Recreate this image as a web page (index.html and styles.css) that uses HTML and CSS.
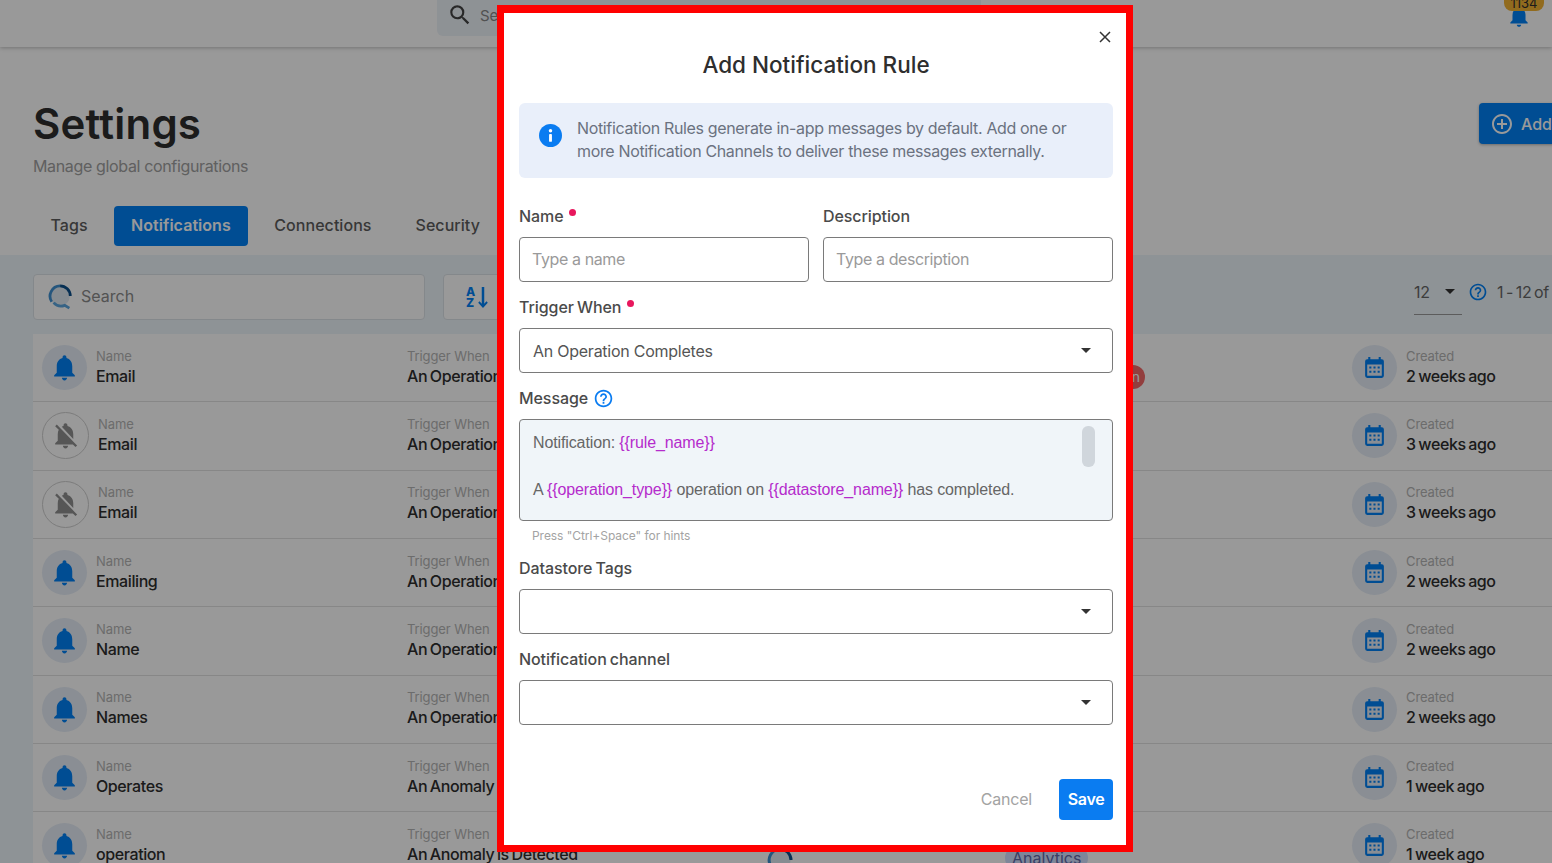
FILE: index.html
```html
<!DOCTYPE html>
<html lang="en">
<head>
    <meta charset="UTF-8">
    <title>Settings - Notifications</title>
    <link rel="stylesheet" href="styles.css">
</head>
<body>
    <svg class="sprites" width="0" height="0">
        <symbol id="bell" viewBox="0 0 24 24"><path d="M12 22c1.1 0 2-.9 2-2h-4c0 1.1.89 2 2 2zm6-6v-5c0-3.07-1.64-5.64-4.5-6.32V4c0-.83-.67-1.5-1.5-1.5s-1.5.67-1.5 1.5v.68C7.63 5.36 6 7.92 6 11v5l-2 2v1h16v-1l-2-2z"/></symbol>
        <symbol id="bell-off" viewBox="0 0 24 24"><path d="M20 18.69 7.84 6.14 5.27 3.49 4 4.76l2.8 2.8v.01c-.52.99-.8 2.16-.8 3.42v5l-2 2v1h13.73l2 2L21 19.72l-1-1.03zM12 22c1.11 0 2-.89 2-2h-4c0 1.11.89 2 2 2zm6-7.32V11c0-3.08-1.64-5.64-4.5-6.32V4c0-.83-.67-1.5-1.5-1.5s-1.5.67-1.5 1.5v.68c-.15.03-.29.08-.42.12-.1.03-.2.07-.3.11h-.01c-.2.08-.4.17-.59.27-.01 0-.01 0-.02.01L18 14.68z"/></symbol>
        <symbol id="calendar" viewBox="0 0 24 24"><path d="M19 4h-1V2h-2v2H8V2H6v2H5a2 2 0 0 0-2 2v14a2 2 0 0 0 2 2h14a2 2 0 0 0 2-2V6a2 2 0 0 0-2-2zm0 16H5V9h14v11z"/><path d="M7 11h2v2H7zM11 11h2v2h-2zM15 11h2v2h-2zM7 15h2v2H7zM11 15h2v2h-2zM15 15h2v2h-2z"/></symbol>
        <symbol id="help" viewBox="0 0 24 24"><path d="M11 18h2v-2h-2v2zm1-16C6.48 2 2 6.48 2 12s4.48 10 10 10 10-4.48 10-10S17.52 2 12 2zm0 18c-4.41 0-8-3.59-8-8s3.59-8 8-8 8 3.59 8 8-3.59 8-8 8zm0-14c-2.21 0-4 1.79-4 4h2c0-1.1.9-2 2-2s2 .9 2 2c0 2-3 1.75-3 5h2c0-2.25 3-2.5 3-5 0-2.21-1.79-4-4-4z"/></symbol>
        <symbol id="logo" viewBox="0 0 28 28">
            <circle cx="13" cy="13" r="10.5" fill="#dfe9f2"/>
            <path d="M4 19A11 11 0 0 1 13 2" fill="none" stroke="#3f8fd0" stroke-width="3"/>
            <path d="M13 2a11 11 0 0 1 11 11" fill="none" stroke="#0b4f8a" stroke-width="3"/>
            <path d="M6 20a11 11 0 0 0 12 3l5 3" fill="none" stroke="#5aa5de" stroke-width="3"/>
        </symbol>
    </svg>

    <div class="page">
        <header class="topbar">
            <div class="global-search">
                <svg class="global-search-icon" viewBox="0 0 24 24"><path d="M15.5 14h-.79l-.28-.27A6.47 6.47 0 0 0 16 9.5 6.5 6.5 0 1 0 9.5 16c1.61 0 3.09-.59 4.23-1.57l.27.28v.79l5 4.99L20.49 19l-4.99-5zm-6 0C7.01 14 5 11.99 5 9.5S7.01 5 9.5 5 14 7.01 14 9.5 11.99 14 9.5 14z"/></svg>
                <span>Search</span>
            </div>
            <div class="topbar-bell">
                <svg class="topbar-bell-icon"><use href="#bell"/></svg>
                <span class="bell-badge">1134</span>
            </div>
        </header>

        <section class="page-head">
            <div class="head-top">
                <div>
                    <h1 class="page-title">Settings</h1>
                    <p class="page-sub">Manage global configurations</p>
                </div>
                <button class="add-btn">
                    <svg class="add-icon" viewBox="0 0 24 24"><path d="M13 7h-2v4H7v2h4v4h2v-4h4v-2h-4V7zm-1-5C6.48 2 2 6.48 2 12s4.48 10 10 10 10-4.48 10-10S17.52 2 12 2zm0 18c-4.41 0-8-3.59-8-8s3.59-8 8-8 8 3.59 8 8-3.59 8-8 8z"/></svg>
                    Add
                </button>
            </div>
            <nav class="tabs">
                <a class="tab">Tags</a>
                <a class="tab tab-active">Notifications</a>
                <a class="tab">Connections</a>
                <a class="tab">Security</a>
            </nav>
        </section>

        <section class="list-area">
            <div class="toolbar">
                <div class="list-search">
                    <svg class="list-search-icon"><use href="#logo"/></svg>
                    <span>Search</span>
                </div>
                <div class="sort-btn">
                    <span class="sort-letters"><span>A</span><span>Z</span></span>
                    <svg class="sort-arrow" viewBox="0 0 10 24"><path d="M3.7 1h2.6v17.5L8.6 16 10 17.4 5 23 0 17.4 1.4 16l2.3 2.5z"/></svg>
                </div>
                <div class="pager">
                    <div class="page-size"><span>12</span><i class="caret"></i></div>
                    <svg class="pager-help"><use href="#help"/></svg>
                    <span class="page-range">1 - 12 of</span>
                </div>
            </div>

            <div class="rule-row">
                <div class="cell"><span class="circle"><svg class="bell"><use href="#bell"/></svg></span><div class="cell-text"><div class="cell-label">Name</div><div class="cell-value">Email</div></div></div>
                <div class="cell-text"><div class="cell-label">Trigger When</div><div class="cell-value">An Operation Completes</div></div>
                <div></div>
                <div class="cell-tag"><span class="red-pill">n</span></div>
                <div class="cell"><span class="circle"><svg class="cal"><use href="#calendar"/></svg></span><div class="cell-text"><div class="cell-label">Created</div><div class="cell-value">2 weeks ago</div></div></div>
            </div>
            <div class="rule-row">
                <div class="cell"><span class="circle circle-off"><svg class="bell"><use href="#bell-off"/></svg></span><div class="cell-text"><div class="cell-label">Name</div><div class="cell-value">Email</div></div></div>
                <div class="cell-text"><div class="cell-label">Trigger When</div><div class="cell-value">An Operation Completes</div></div>
                <div></div>
                <div></div>
                <div class="cell"><span class="circle"><svg class="cal"><use href="#calendar"/></svg></span><div class="cell-text"><div class="cell-label">Created</div><div class="cell-value">3 weeks ago</div></div></div>
            </div>
            <div class="rule-row">
                <div class="cell"><span class="circle circle-off"><svg class="bell"><use href="#bell-off"/></svg></span><div class="cell-text"><div class="cell-label">Name</div><div class="cell-value">Email</div></div></div>
                <div class="cell-text"><div class="cell-label">Trigger When</div><div class="cell-value">An Operation Completes</div></div>
                <div></div>
                <div></div>
                <div class="cell"><span class="circle"><svg class="cal"><use href="#calendar"/></svg></span><div class="cell-text"><div class="cell-label">Created</div><div class="cell-value">3 weeks ago</div></div></div>
            </div>
            <div class="rule-row">
                <div class="cell"><span class="circle"><svg class="bell"><use href="#bell"/></svg></span><div class="cell-text"><div class="cell-label">Name</div><div class="cell-value">Emailing</div></div></div>
                <div class="cell-text"><div class="cell-label">Trigger When</div><div class="cell-value">An Operation Completes</div></div>
                <div></div>
                <div></div>
                <div class="cell"><span class="circle"><svg class="cal"><use href="#calendar"/></svg></span><div class="cell-text"><div class="cell-label">Created</div><div class="cell-value">2 weeks ago</div></div></div>
            </div>
            <div class="rule-row">
                <div class="cell"><span class="circle"><svg class="bell"><use href="#bell"/></svg></span><div class="cell-text"><div class="cell-label">Name</div><div class="cell-value">Name</div></div></div>
                <div class="cell-text"><div class="cell-label">Trigger When</div><div class="cell-value">An Operation Completes</div></div>
                <div></div>
                <div></div>
                <div class="cell"><span class="circle"><svg class="cal"><use href="#calendar"/></svg></span><div class="cell-text"><div class="cell-label">Created</div><div class="cell-value">2 weeks ago</div></div></div>
            </div>
            <div class="rule-row">
                <div class="cell"><span class="circle"><svg class="bell"><use href="#bell"/></svg></span><div class="cell-text"><div class="cell-label">Name</div><div class="cell-value">Names</div></div></div>
                <div class="cell-text"><div class="cell-label">Trigger When</div><div class="cell-value">An Operation Completes</div></div>
                <div></div>
                <div></div>
                <div class="cell"><span class="circle"><svg class="cal"><use href="#calendar"/></svg></span><div class="cell-text"><div class="cell-label">Created</div><div class="cell-value">2 weeks ago</div></div></div>
            </div>
            <div class="rule-row">
                <div class="cell"><span class="circle"><svg class="bell"><use href="#bell"/></svg></span><div class="cell-text"><div class="cell-label">Name</div><div class="cell-value">Operates</div></div></div>
                <div class="cell-text"><div class="cell-label">Trigger When</div><div class="cell-value">An Anomaly is Detected</div></div>
                <div></div>
                <div></div>
                <div class="cell"><span class="circle"><svg class="cal"><use href="#calendar"/></svg></span><div class="cell-text"><div class="cell-label">Created</div><div class="cell-value">1 week ago</div></div></div>
            </div>
            <div class="rule-row">
                <div class="cell"><span class="circle"><svg class="bell"><use href="#bell"/></svg></span><div class="cell-text"><div class="cell-label">Name</div><div class="cell-value">operation</div></div></div>
                <div class="cell-text"><div class="cell-label">Trigger When</div><div class="cell-value">An Anomaly is Detected</div></div>
                <div class="cell-source"><svg class="source-icon"><use href="#logo"/></svg></div>
                <div class="cell-tag"><span class="tag-pill">Analytics</span></div>
                <div class="cell"><span class="circle"><svg class="cal"><use href="#calendar"/></svg></span><div class="cell-text"><div class="cell-label">Created</div><div class="cell-value">1 week ago</div></div></div>
            </div>
        </section>
    </div>

    <div class="backdrop">
        <div class="modal">
            <button class="modal-close">
                <svg viewBox="0 0 12 12"><path d="M1 1l10 10M11 1 1 11" stroke="#333" stroke-width="1.5" fill="none"/></svg>
            </button>
            <h2 class="modal-title">Add Notification Rule</h2>

            <div class="info-box">
                <svg class="info-icon" viewBox="0 0 24 24"><circle cx="12" cy="12" r="12" fill="#0a7cf1"/><rect x="10.5" y="10.5" width="3" height="8" rx=".5" fill="#fff"/><circle cx="12" cy="7" r="1.8" fill="#fff"/></svg>
                <p>Notification Rules generate in-app messages by default. Add one or more Notification Channels to deliver these messages externally.</p>
            </div>

            <div class="field-pair">
                <div>
                    <label class="field-label">Name <i class="req"></i></label>
                    <div class="input placeholder">Type a name</div>
                </div>
                <div>
                    <label class="field-label">Description</label>
                    <div class="input placeholder">Type a description</div>
                </div>
            </div>

            <div class="field">
                <label class="field-label">Trigger When <i class="req"></i></label>
                <div class="input select">An Operation Completes<i class="caret"></i></div>
            </div>

            <div class="field">
                <label class="field-label">Message <svg class="label-help"><use href="#help"/></svg></label>
                <div class="editor">
                    <div class="editor-line">Notification: <span class="token">{{rule_name}}</span></div>
                    <div class="editor-line">&nbsp;</div>
                    <div class="editor-line">A <span class="token">{{operation_type}}</span> operation on <span class="token">{{datastore_name}}</span> has completed.</div>
                    <span class="editor-thumb"></span>
                </div>
                <div class="hint">Press "Ctrl+Space" for hints</div>
            </div>

            <div class="field">
                <label class="field-label">Datastore Tags</label>
                <div class="input select select-empty"><i class="caret"></i></div>
            </div>

            <div class="field">
                <label class="field-label">Notification channel</label>
                <div class="input select select-empty"><i class="caret"></i></div>
            </div>

            <div class="modal-actions">
                <button class="btn-cancel">Cancel</button>
                <button class="btn-save">Save</button>
            </div>
        </div>
    </div>
</body>
</html>
```

FILE: styles.css
```css
* {
    box-sizing: border-box;
}
html, body {
    margin: 0;
    height: 100%;
    overflow: hidden;
}
body {
    font-family: Inter, "Noto Sans", sans-serif;
    color: #2e2e2e;
    background-color: #fff;
}
h1, h2, p {
    margin: 0;
}
button {
    font-family: inherit;
    border: none;
    background: none;
    padding: 0;
}
.sprites {
    position: absolute;
}
.page {
    height: 100%;
    overflow: hidden;
}

/* top bar */
.topbar {
    position: relative;
    display: flex;
    height: 47px;
    padding-left: 437px;
    background-color: #fff;
    box-shadow: 0 1px 4px rgba(0,0,0,0.25);
}
.global-search {
    display: flex;
    align-items: center;
    width: 544px;
    height: 36px;
    padding: 0 0 6px 10px;
    gap: 7px;
    background-color: #edf3f9;
    border-radius: 0 0 6px 6px;
    font-size: 15px;
    color: #888;
}
.global-search-icon {
    width: 26px;
    height: 26px;
    fill: #444;
}
.topbar-bell {
    position: absolute;
    left: 1504px;
    top: 0;
}
.topbar-bell-icon {
    position: absolute;
    left: 0;
    top: 3px;
    width: 30px;
    height: 26px;
    fill: #0080f6;
}
.bell-badge {
    position: absolute;
    left: 0;
    top: -10px;
    width: 40px;
    height: 21px;
    padding-top: 6px;
    border-radius: 0 0 8px 8px;
    background-color: #f2b233;
    font-size: 13px;
    line-height: 14px;
    text-align: center;
}

/* page heading */
.page-head {
    height: 208px;
    padding: 52px 0 0 33px;
}
.head-top {
    display: flex;
    justify-content: space-between;
    align-items: flex-start;
}
.page-title {
    font-size: 42px;
    line-height: 50px;
    font-weight: 600;
    letter-spacing: 0.2px;
}
.page-sub {
    margin-top: 6px;
    font-size: 16px;
    line-height: 22px;
    letter-spacing: -0.35px;
    color: #a0a0a0;
}
.add-btn {
    display: flex;
    align-items: center;
    gap: 7px;
    flex-shrink: 0;
    width: 100px;
    height: 41px;
    margin: 4px -27px 0 0;
    padding-left: 11px;
    border-radius: 4px 0 0 4px;
    background-color: #0080f6;
    box-shadow: 0 1px 3px rgba(0,0,0,0.3);
    color: #fff;
    font-size: 16px;
    font-weight: 500;
}
.add-icon {
    width: 24px;
    height: 24px;
    fill: #fff;
}
.tabs {
    display: flex;
    gap: 9px;
    margin-top: 29px;
}
.tab {
    height: 40px;
    padding: 0 17.5px;
    border-radius: 4px;
    font-size: 16px;
    line-height: 38px;
    font-weight: 500;
    letter-spacing: 0.05px;
    color: #5c5c5c;
}
.tab-active {
    padding: 0 17px;
    background-color: #0080f6;
    color: #fff;
    font-weight: 600;
}

/* list */
.list-area {
    height: 608px;
    background-color: #edf5fb;
    padding-top: 19px;
}
.toolbar {
    display: flex;
    height: 46px;
    margin: 0 0 14px 33px;
}
.list-search {
    display: flex;
    align-items: center;
    gap: 7px;
    width: 392px;
    padding-left: 14px;
    background-color: #fff;
    border: 1px solid #dde3e8;
    border-radius: 4px;
    font-size: 16px;
    line-height: 20px;
    color: #8a8a8a;
}
.list-search span {
    margin-bottom: 2px;
}
.list-search-icon {
    width: 26px;
    height: 28px;
}
.sort-btn {
    display: flex;
    align-items: center;
    gap: 3px;
    width: 64px;
    margin-left: 18px;
    padding-left: 22px;
    background-color: #fff;
    border: 1px solid #dde3e8;
    border-radius: 4px;
}
.sort-letters {
    display: flex;
    flex-direction: column;
    font-size: 12px;
    line-height: 11px;
    font-weight: 800;
    color: #0080f6;
}
.sort-arrow {
    width: 10px;
    height: 23px;
    fill: #0080f6;
}
.pager {
    display: flex;
    align-items: flex-start;
    margin-left: auto;
    margin-right: 3px;
    height: 41px;
    font-size: 16px;
    line-height: 36px;
    letter-spacing: -0.3px;
    color: #666;
}
.page-size {
    display: flex;
    align-items: flex-start;
    justify-content: space-between;
    width: 48px;
    height: 41px;
    padding-right: 7px;
    border-bottom: 1px solid #999;
}
.page-size .caret {
    margin-top: 15px;
}
.pager-help {
    width: 20px;
    height: 20px;
    margin: 8px 9px 0 6px;
    fill: #0080f6;
}
.page-range {
    word-spacing: -1.5px;
}
.caret {
    width: 0;
    height: 0;
    border-left: 5.5px solid transparent;
    border-right: 5.5px solid transparent;
    border-top: 5.5px solid #333;
}
.rule-row {
    display: grid;
    grid-template-columns: 365px 350px 248px 347px 1fr;
    height: 68.33px;
    margin-left: 33px;
    padding-left: 9px;
    background-color: #fff;
    border-bottom: 1px solid #e2e2e2;
}
.cell {
    display: flex;
    align-items: center;
    gap: 9px;
}
.cell-text {
    align-self: center;
    margin-top: -2px;
}
.cell-label {
    font-size: 13px;
    line-height: 18px;
    letter-spacing: -0.1px;
    color: #b4b4b4;
}
.cell-value {
    font-size: 16px;
    line-height: 22px;
    font-weight: 500;
    letter-spacing: -0.4px;
    word-spacing: -1.2px;
    white-space: nowrap;
    color: #2e2e2e;
}
.circle {
    display: flex;
    align-items: center;
    justify-content: center;
    width: 45px;
    height: 45px;
    border-radius: 50%;
    background-color: #e6edf7;
}
.circle-off {
    width: 47px;
    height: 47px;
    background: none;
    border: 1px solid #cfcfcf;
}
.bell {
    width: 31px;
    height: 31px;
    fill: #0080f6;
}
.circle-off .bell {
    fill: #8f8f8f;
}
.cal {
    width: 25px;
    height: 25px;
    fill: #0080f6;
}
.cell-tag {
    padding-top: 31px;
}
.red-pill {
    display: block;
    width: 25px;
    height: 24px;
    margin-left: 115px;
    padding-right: 5px;
    border-radius: 12px;
    background-color: #f46868;
    color: #fff;
    font-size: 14px;
    line-height: 24px;
    text-align: right;
}
.tag-pill {
    display: inline-block;
    margin-top: 3px;
    height: 24px;
    padding: 0 7px;
    border-radius: 12px;
    background-color: #d3e0ff;
    color: #5f68a8;
    font-size: 16px;
    line-height: 24px;
}
.cell-source {
    padding: 35px 0 0 10px;
}
.source-icon {
    width: 28px;
    height: 28px;
}

/* dimmed layer and dialog */
.backdrop {
    position: fixed;
    top: 0;
    left: 0;
    right: 0;
    bottom: 0;
    background-color: rgba(0,0,0,0.4);
}
.modal {
    position: relative;
    width: 636px;
    height: 847px;
    margin: 5px 0 0 497px;
    padding: 37px 13px 0 15px;
    background-color: #fff;
    border: 7px solid #ff0000;
    border-top-width: 8px;
}
.modal-close {
    position: absolute;
    top: 18px;
    right: 15px;
    width: 12px;
    height: 12px;
    display: flex;
}
.modal-title {
    font-size: 22.5px;
    line-height: 30px;
    font-weight: 500;
    letter-spacing: 0;
    text-align: center;
    color: #2e2e2e;
}
.info-box {
    display: flex;
    align-items: center;
    gap: 15px;
    height: 75px;
    margin-top: 23px;
    padding: 0 20px 2px;
    border-radius: 6px;
    background-color: #e9effa;
}
.info-icon {
    flex-shrink: 0;
    width: 23px;
    height: 23px;
    margin-top: -9px;
}
.info-box p {
    font-size: 16px;
    line-height: 23px;
    letter-spacing: -0.35px;
    color: #6b7280;
}
.field-pair {
    display: grid;
    grid-template-columns: 290px 290px;
    gap: 14px;
    margin-top: 26px;
}
.field {
    margin-top: 13px;
}
.field-label {
    display: flex;
    align-items: flex-start;
    height: 24px;
    margin-bottom: 9px;
    font-size: 16px;
    line-height: 24px;
    font-weight: 500;
    letter-spacing: -0.08px;
    word-spacing: -1px;
    color: #4a4a4a;
}
.req {
    width: 7px;
    height: 7px;
    margin: 5px 0 0 6px;
    border-radius: 50%;
    background-color: #e8175d;
}
.label-help {
    width: 21px;
    height: 21px;
    margin: 2px 0 0 5px;
    fill: #0a7cf1;
}
.input {
    display: flex;
    align-items: center;
    height: 45px;
    padding: 0 13px;
    border: 1px solid #7a7a7a;
    border-radius: 4px;
    font-size: 16px;
    letter-spacing: -0.25px;
    color: #555;
}
.placeholder {
    padding: 0 12px 2px;
    letter-spacing: -0.4px;
    color: #9a9a9a;
}
.select {
    justify-content: space-between;
    padding-right: 21px;
}
.select-empty {
    justify-content: flex-end;
}
.editor {
    position: relative;
    height: 102px;
    padding: 11px 13px;
    border: 1px solid #7a7a7a;
    border-radius: 4px;
    background-color: #f0f5f9;
    font-family: "Liberation Sans", Arial, sans-serif;
    font-size: 16px;
    letter-spacing: -0.12px;
    color: #666;
}
.editor-line {
    height: 23.5px;
    line-height: 23.5px;
}
.token {
    color: #b52ccc;
}
.editor-thumb {
    position: absolute;
    top: 6px;
    right: 17px;
    width: 13px;
    height: 41px;
    border-radius: 6px;
    background-color: #d0d6dc;
}
.hint {
    margin-top: 8px;
    padding-left: 13px;
    font-size: 12px;
    line-height: 14px;
    letter-spacing: -0.05px;
    color: #a3a3a3;
}
.modal-actions {
    display: flex;
    justify-content: flex-end;
    align-items: center;
    gap: 27px;
    margin-top: 54px;
}
.btn-cancel {
    padding-bottom: 2px;
    font-size: 16px;
    letter-spacing: -0.2px;
    color: #a3a3a3;
}
.btn-save {
    width: 54px;
    height: 41px;
    padding-bottom: 2px;
    border-radius: 4px;
    background-color: #0a7cf1;
    color: #fff;
    font-size: 16px;
    font-weight: 600;
    letter-spacing: -0.3px;
}
```
